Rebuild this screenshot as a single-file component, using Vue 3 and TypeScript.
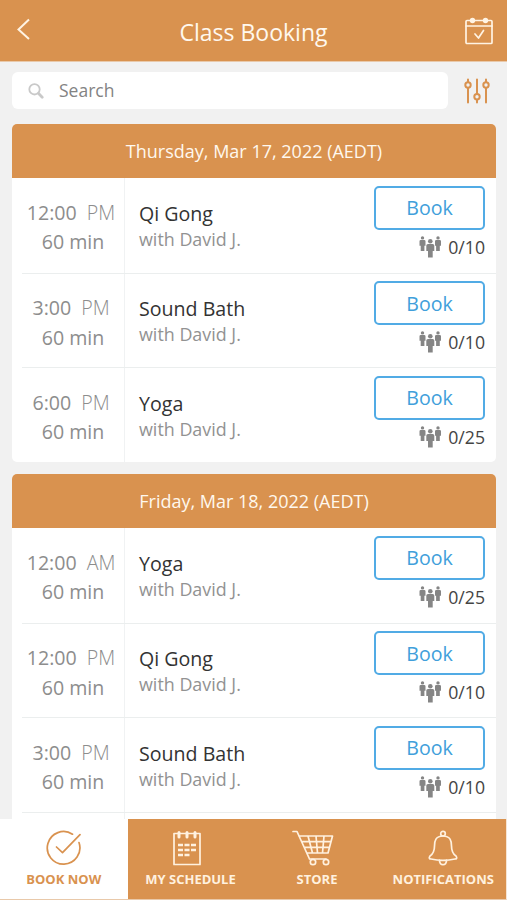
<script setup lang="ts">
interface ClassSlot {
  time: string
  period: 'AM' | 'PM'
  title: string
  spots: string
  tall?: boolean
}
interface Day {
  label: string
  slots: ClassSlot[]
}

const days: Day[] = [
  {
    label: 'Thursday, Mar 17, 2022 (AEDT)',
    slots: [
      { time: '12:00', period: 'PM', title: 'Qi Gong', spots: '0/10' },
      { time: '3:00', period: 'PM', title: 'Sound Bath', spots: '0/10' },
      { time: '6:00', period: 'PM', title: 'Yoga', spots: '0/25' },
    ],
  },
  {
    label: 'Friday, Mar 18, 2022 (AEDT)',
    slots: [
      { time: '12:00', period: 'AM', title: 'Yoga', spots: '0/25' },
      { time: '12:00', period: 'PM', title: 'Qi Gong', spots: '0/10' },
      { time: '3:00', period: 'PM', title: 'Sound Bath', spots: '0/10' },
      { time: '', period: 'PM', title: 'A Still Mind', spots: '', tall: true },
    ],
  },
]
</script>

<template>
  <div class="app">
    <header class="topbar">
      <svg class="back" width="14" height="22" viewBox="0 0 14 22"><path d="M12 1.500 1.500 11.500l10.500 9.500" /></svg>
      <h1>Class Booking</h1>
      <svg class="calendar" width="28" height="28" viewBox="0 0 28 28">
        <rect x="1" y="3.500" width="26" height="23" rx="1" />
        <path d="M1 9h26M10 17l3.500 4L18.500 13.500" />
        <g class="knob"><circle cx="7.500" cy="3.500" r="2.700" /><circle cx="20.500" cy="3.500" r="2.700" /></g>
      </svg>
    </header>

    <div class="tools">
      <div class="search">
        <svg width="16" height="16" viewBox="0 0 16 16"><circle cx="6.500" cy="6.300" r="5.200" /><path class="handle" d="m10.600 10.600 3.600 3.600" /></svg>
        <span>Search</span>
      </div>
      <svg class="filter" width="26" height="26" viewBox="0 0 26 26">
        <path d="M4 1.500V4M4 10v14.500M13 1.500V16M13 22v2.500M22 1.500V4M22 10v14.500" />
        <circle cx="4" cy="7" r="2.700" /><circle cx="13" cy="18.800" r="2.700" /><circle cx="22" cy="7" r="2.700" />
      </svg>
    </div>

    <main>
      <section v-for="day in days" :key="day.label" class="day">
        <h2>{{ day.label }}</h2>
        <article v-for="(slot, i) in day.slots" :key="i" class="slot" :class="{ tall: slot.tall }">
          <div class="when">
            <template v-if="!slot.tall">
              <div>{{ slot.time }}<span class="period">{{ slot.period }}</span></div>
              <div class="length">60 min</div>
            </template>
          </div>
          <div class="what">
            <h3>{{ slot.title }}</h3>
            <p v-if="!slot.tall">with David J.</p>
          </div>
          <div class="action">
            <button type="button"><template v-if="!slot.tall">Book</template></button>
            <div v-if="!slot.tall" class="spots">
              <svg width="23" height="22" viewBox="0 0 23 22">
                <circle cx="3.500" cy="1.900" r="1.700" /><circle cx="19" cy="1.900" r="1.700" />
                <path d="M.5 5.200Q.5 4 1.800 4h3.400q1.300 0 1.300 1.200v4.500H5.400V15H1.700V9.700H.5zM16 5.200Q16 4 17.300 4h3.400Q22 4 22 5.200v4.500h-1.200V15h-3.700V9.700H16z" />
                <circle cx="11.300" cy="5.200" r="2.300" />
                <path d="M7.300 9.600q0-1.600 1.700-1.600h4.600q1.700 0 1.700 1.600v5.400h-1.600v6.500H9V15H7.300z" />
              </svg>
              <span>{{ slot.spots }}</span>
            </div>
          </div>
        </article>
      </section>
    </main>

    <nav>
      <a class="active">
        <svg width="36" height="36" viewBox="0 0 36 36"><path d="M26.500 4.200A16.300 16.300 0 1 0 33 12.500M10.500 17l6 5.700L34 4.700" /></svg>
        <span>BOOK NOW</span>
      </a>
      <a>
        <svg class="schedule" width="36" height="36" viewBox="0 0 36 36">
          <path d="M5 3.500h26v31H5z" /><path class="bold" d="M10 2.500v4.500M18 2.500v4.500M26 2.500v4.500" />
          <path class="dots" d="M9 15h18M9 20h18M9 25h12" />
        </svg>
        <span>MY SCHEDULE</span>
      </a>
      <a>
        <svg class="cart" width="42" height="36" viewBox="0 0 42 36">
          <path d="M1 1.500h4L17.500 29M7 6h33.500l-4.500 17H15M10 11.700h29M12.500 17.300h25M16 6l4.500 17M24 6l1.500 17M32 6l-1.500 17M17.500 29H34" />
          <circle cx="21" cy="32" r="2.700" /><circle cx="34" cy="32" r="2.700" />
        </svg>
        <span>STORE</span>
      </a>
      <a>
        <svg width="36" height="36" viewBox="0 0 36 36">
          <circle cx="18" cy="3.700" r="2.300" />
          <path d="M18 6C10.500 6 9.500 11 9.500 16c0 5-1.500 8-4.500 10-1.500 2-.5 3 1 3 7 1.500 17 1.500 24 0 1.500 0 2.500-1 1-3-3-2-4.500-5-4.500-10 0-5-1-10-8.500-10ZM14.500 30.200c-.5 6 7.500 6 7 0" />
        </svg>
        <span>NOTIFICATIONS</span>
      </a>
    </nav>
  </div>
</template>

<style>
body { margin: 0; background: #f1f1f1; overflow: hidden; }
</style>

<style scoped>
* { box-sizing: border-box; }
h1, h2, h3, p { margin: 0; font-weight: 400; }
svg { display: block; flex: none; fill: none; stroke: currentColor; stroke-width: 1.700; stroke-linecap: round; stroke-linejoin: round; }
.app { height: 900px; display: flex; flex-direction: column; overflow: hidden; background: #f1f1f1; font-family: "Open Sans", "Noto Sans", sans-serif; }
.topbar { flex: none; height: 62px; display: grid; grid-template-columns: 60px 1fr 60px; align-items: center; background: #d9924f; border-bottom: 1px solid #e9c9aa; color: #fff3e3; }
.topbar h1 { font-size: 23px; line-height: 34px; text-align: center; padding-top: 2px; color: #fff8ee; }
.back { margin: -4px 0 0 17px; stroke-width: 2; stroke-linecap: butt; stroke-linejoin: miter; }
.calendar { margin: 0 0 0 17.500px; }
.knob { fill: currentColor; stroke: none; }
.tools { flex: none; height: 62px; padding: 10px 17px 15px 12px; display: flex; justify-content: space-between; }
.search { width: 436px; height: 37px; display: flex; align-items: center; gap: 15px; padding-left: 16px; border-radius: 6px; background: #fff; font-size: 17.500px; color: #838383; }
.search svg { color: #c9c9c9; stroke-width: 1.800; }
.search .handle { stroke-width: 2.800; }
.search span { padding-bottom: 1px; }
.filter { margin-top: 6px; color: #d9924f; stroke-width: 2; }
main { flex: 1; min-height: 0; overflow: hidden; padding: 0 11px 0 12px; display: flex; flex-direction: column; gap: 12px; }
.day { flex: none; overflow: hidden; border-radius: 5px; background: #fff; }
.day h2 { height: 54px; line-height: 54px; background: #d9924f; color: #fff8ee; font-size: 18px; text-align: center; }
.slot { height: 94.700px; display: grid; grid-template-columns: 103px 1fr 111px; margin: 0 11px 0 10px; }
.slot + .slot { border-top: 1px solid #ebeeee; margin-right: 0; padding-right: 11px; }
.when { border-right: 1px solid #f0f2f3; padding: 19.500px 4px 0 0; text-align: center; font-size: 19.600px; line-height: 29.500px; color: #8d8d8d; }
.length { padding-left: 4px; }
.period { margin-left: 10px; font-weight: 300; }
.what { padding: 21.500px 0 0 14px; }
.what h3 { font-size: 19.600px; line-height: 28px; color: #333; }
.what p { font-size: 17.900px; line-height: 22px; color: #929292; }
.slot.tall { height: 50px; }
.tall .what { padding-top: 0; }
.tall .action { padding-top: 6px; }
.action { padding-top: 7.500px; }
button { display: block; width: 111px; height: 44px; padding: 0; border: 2px solid #51abe5; border-radius: 5px; background: #fff; color: #419fdb; font: 19.600px/39px "Open Sans", sans-serif; }
.spots { margin-top: 6px; display: flex; justify-content: flex-end; gap: 6px; font-size: 17.700px; line-height: 22px; color: #444; }
.spots svg { fill: #858585; stroke: none; }
nav { flex: none; height: 81px; display: grid; grid-template-columns: 127.500px 126px 127px 1fr; border-right: 1px solid #f6e5d5; border-bottom: 1px solid #e9c9aa; background: #d9924f; }
nav a { display: flex; flex-direction: column; align-items: center; padding-top: 11px; color: #fff1df; white-space: nowrap; }
nav a.active { background: #fff; color: #d9924f; }
nav span { margin-top: 3.500px; font-size: 13px; line-height: 18px; font-weight: 700; }
.schedule { margin-right: 7px; }
.cart { margin-right: 8px; }
.bold { stroke-width: 3; }
.dots { stroke-width: 2.500; stroke-dasharray: 5 1.500; stroke-linecap: butt; }
</style>
